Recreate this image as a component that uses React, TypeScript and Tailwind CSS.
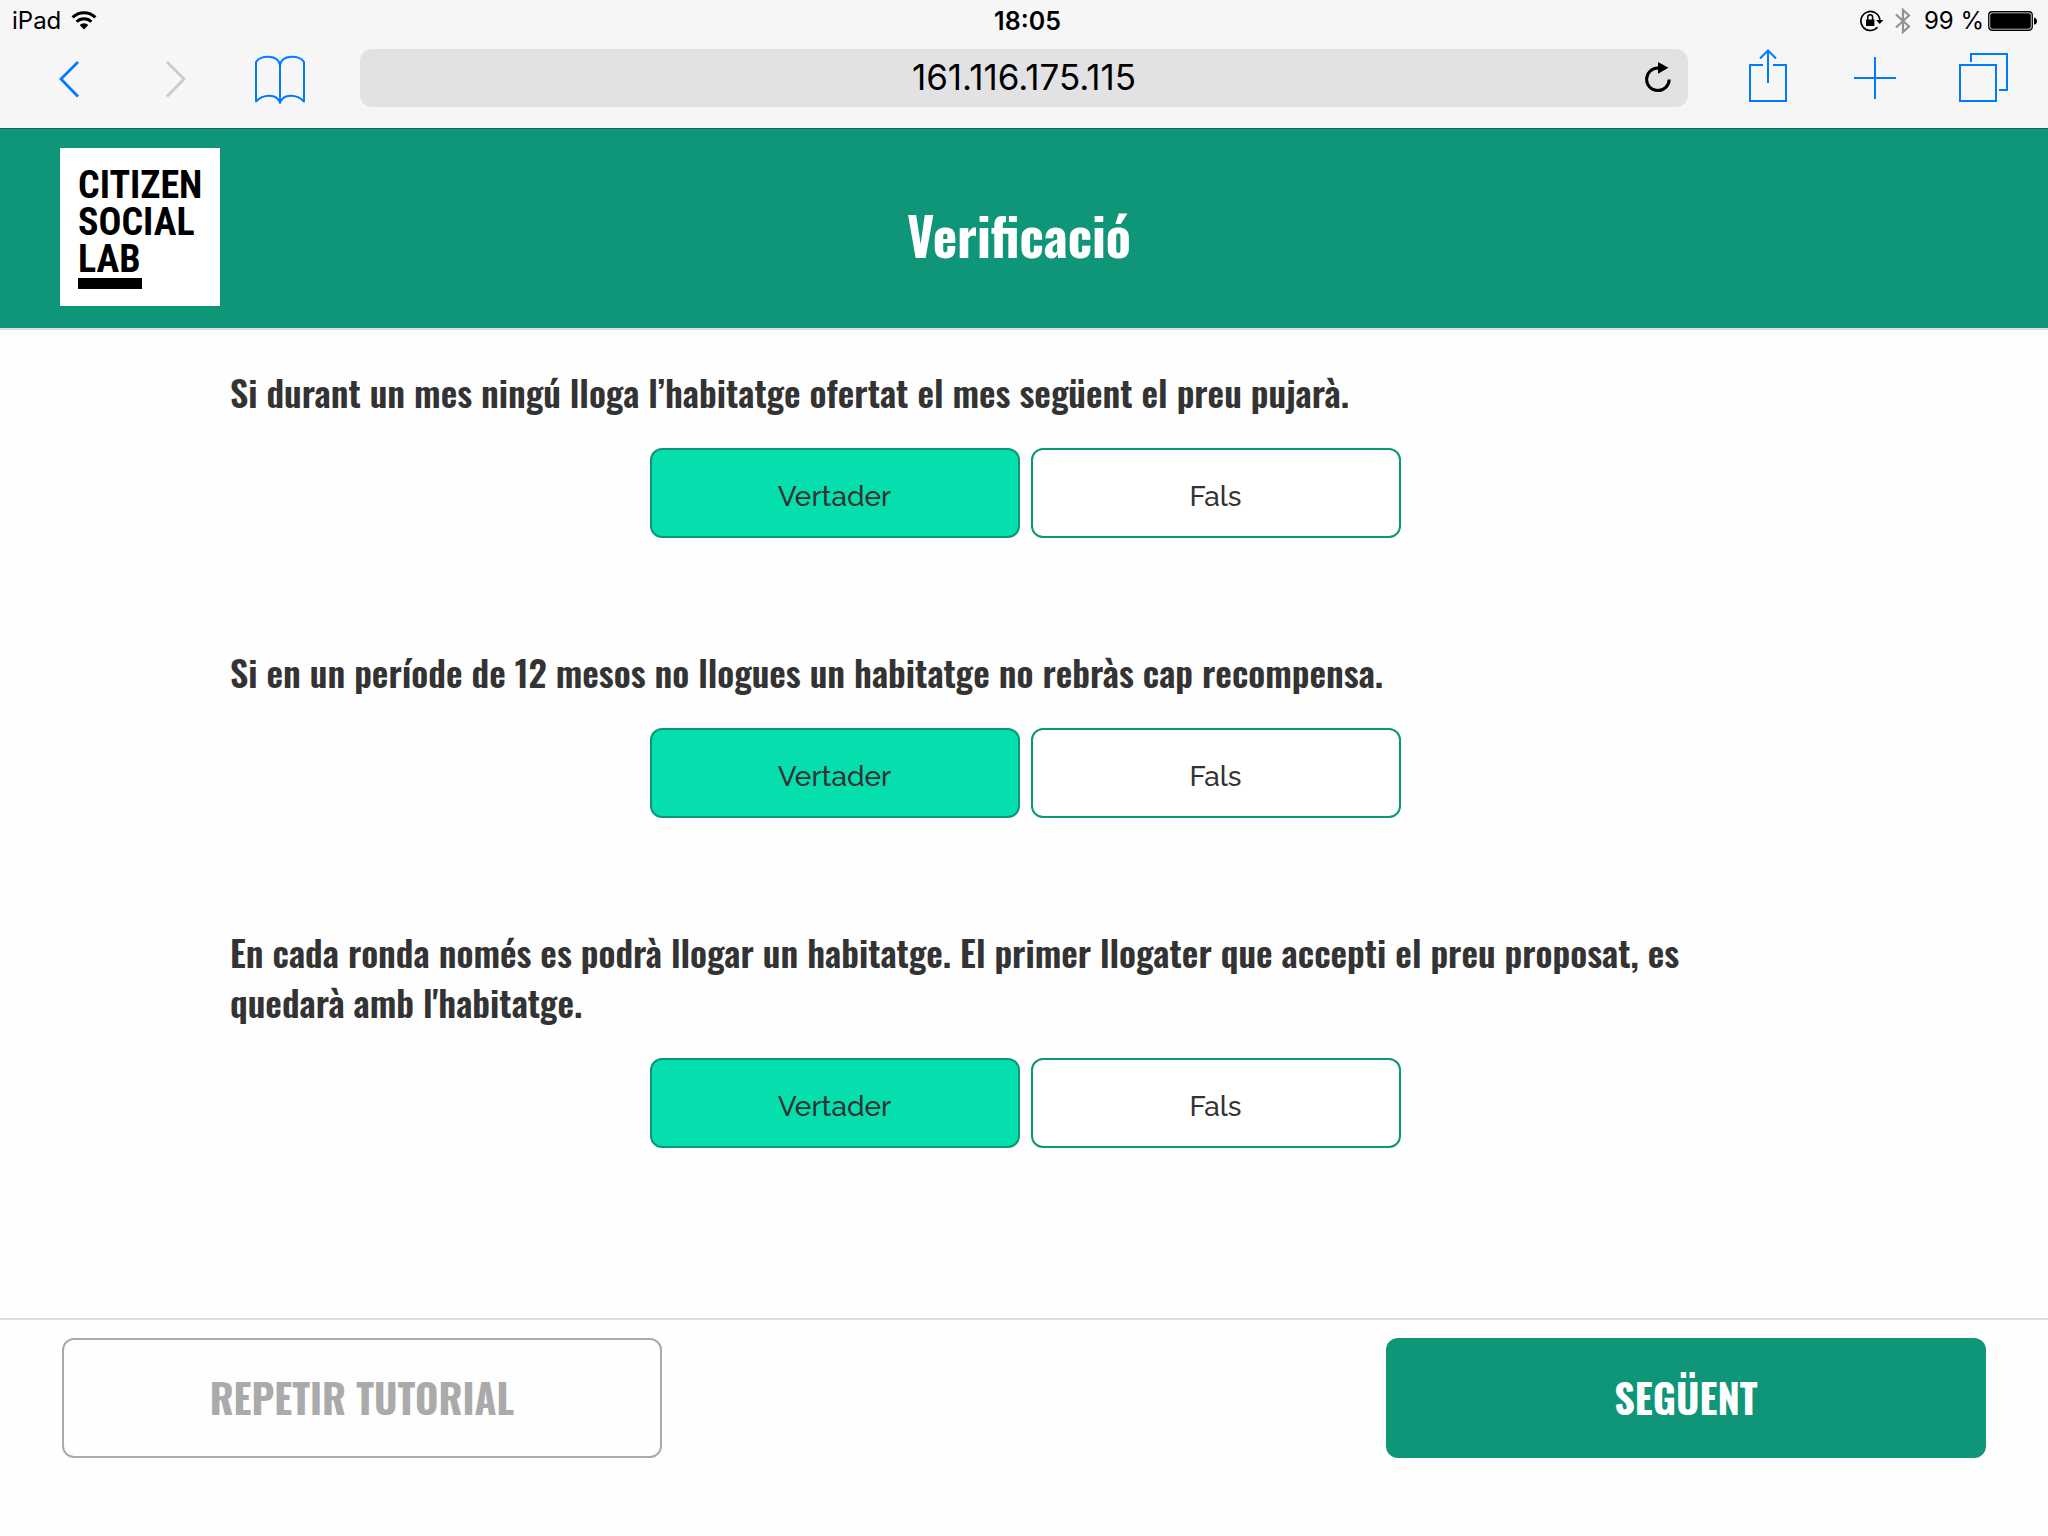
import { useState } from "react";

const display = "font-['Oswald',sans-serif]";

function StatusBar() {
  return (
    <div className="grid h-10 grid-cols-3 items-center pt-px pr-[11px] pl-3 text-2xl leading-8 text-black">
      <div className="flex items-center gap-[10px]">
        <span>iPad</span>
        <svg width="26" height="20" viewBox="0 0 26 20" aria-label="Wi-Fi">
          <g fill="none" stroke="#000" strokeWidth="3">
            <path d="M1.600 6.400a16.200 16.200 0 0 1 22.800 0" />
            <path d="M5.600 10.800a10.600 10.600 0 0 1 14.800 0" />
          </g>
          <path d="M8.700 14a6.200 6.200 0 0 1 8.600 0L13 18.500z" />
        </svg>
      </div>
      <div className="pl-[6px] text-center text-[25px] font-semibold">18:05</div>
      <div className="flex items-center justify-end">
        <svg width="24" height="22" viewBox="0 0 24 22" className="mr-[11px]" aria-label="Rotation lock">
          <path d="M17.500 17.300A9.500 9.500 0 1 1 19.900 10.500" fill="none" stroke="#000" strokeWidth="1.700" />
          <path d="M16 10h7.400l-3.700 4z" />
          <path d="M6 9.500h8.400v6.500H6z" />
          <path d="M7.800 10V7.200a2.400 2.400 0 0 1 4.800 0V10" fill="none" stroke="#000" strokeWidth="1.500" />
        </svg>
        <svg width="16" height="28" viewBox="0 0 16 28" className="mr-[13px]" aria-label="Bluetooth">
          <path d="M1 7.500l13 12-6 5.500V3l6 5.500-13 12" fill="none" stroke="#929292" strokeWidth="2.200" />
        </svg>
        <span className="mr-1">99 %</span>
        <svg width="49" height="20" viewBox="0 0 49 20" aria-label="Battery">
          <rect x=".75" y=".75" width="43.500" height="18.500" rx="3.400" fill="none" stroke="#000" strokeWidth="1.300" />
          <rect x="2.200" y="2.200" width="40.600" height="15.600" rx="2" />
          <path d="M46 6.600q3 1 3 3.600t-3 3.600z" />
        </svg>
      </div>
    </div>
  );
}

function Toolbar() {
  return (
    <div className="flex h-[89px] items-start border-b border-[#0d6b55] pt-2 text-[#007aff]">
      <button type="button" aria-label="Back" className="ml-[58px]">
        <svg width="22" height="60" viewBox="0 0 22 60" fill="none" stroke="currentColor" strokeWidth="2.800">
          <path d="M20 14L3 31l17 17.500" />
        </svg>
      </button>
      <button type="button" aria-label="Forward" disabled className="ml-[85px] text-[#cbcbcb]">
        <svg width="22" height="60" viewBox="0 0 22 60" fill="none" stroke="currentColor" strokeWidth="2.800">
          <path d="M2 14l17 17L2 48.500" />
        </svg>
      </button>
      <button type="button" aria-label="Bookmarks" className="ml-[68px]">
        <svg width="50" height="60" viewBox="0 0 50 60" fill="none" stroke="currentColor" strokeWidth="2" strokeLinejoin="round">
          <path d="M25 17C23 6 5 7 1 14v39.500C8 46 22 45 25 55c3-10 17-9 24-1.500V14C45 7 27 6 25 17v38" />
        </svg>
      </button>
      <div className="mt-px ml-[55px] flex h-[58px] flex-1 items-center rounded-xl bg-[#e2e2e4] text-black">
        <input
          type="text"
          aria-label="Address"
          defaultValue="161.116.175.115"
          className="h-full min-w-0 flex-1 bg-transparent pb-[2px] pl-[70px] text-center text-[35px] outline-none"
        />
        <button type="button" aria-label="Reload" className="mr-[14px] ml-[26px]">
          <svg width="30" height="32" viewBox="0 0 30 32">
            <path d="M25.200 17.500A11.300 11.300 0 1 1 14 6" fill="none" stroke="#000" strokeWidth="3" />
            <path d="M14 0l10.500 5.800L14 11.800z" />
          </svg>
        </button>
      </div>
      <button type="button" aria-label="Share" className="ml-[61px]">
        <svg width="38" height="60" viewBox="0 0 38 60" fill="none" stroke="currentColor" strokeWidth="2">
          <path d="M14 17H1v36h36V17H24M19 35V3M11 10.500L19 2.500l8 8" />
        </svg>
      </button>
      <button type="button" aria-label="New tab" className="ml-[67px]">
        <svg width="42" height="60" viewBox="0 0 42 60" fill="none" stroke="currentColor" strokeWidth="2">
          <path d="M0 30h42M21 9v42" />
        </svg>
      </button>
      <button type="button" aria-label="Tabs" className="mr-10 ml-[63px]">
        <svg width="49" height="60" viewBox="0 0 49 60" fill="none" stroke="currentColor" strokeWidth="2">
          <path d="M1 17h36v36H1zM12 14V6h36v36h-8" />
        </svg>
      </button>
    </div>
  );
}

function Logo() {
  return (
    <div className="h-[158px] w-40 bg-white pt-[19px] pl-[18px] font-['Roboto_Condensed',sans-serif] text-[38px] leading-[37px] font-bold text-black">
      <div>CITIZEN</div>
      <div>SOCIAL</div>
      <div>LAB</div>
      <div className="h-[11px] w-16 bg-black" />
    </div>
  );
}

const questions = [
  "Si durant un mes ningú lloga l’habitatge ofertat el mes següent el preu pujarà.",
  "Si en un període de 12 mesos no llogues un habitatge no rebràs cap recompensa.",
  "En cada ronda només es podrà llogar un habitatge. El primer llogater que accepti el preu proposat, es quedarà amb l'habitatge.",
];

function Question({ text }: { text: string }) {
  const [value, setValue] = useState(true);
  const base =
    "h-[90px] w-[370px] rounded-xl border-2 border-[#0f9577] pt-2 font-['Raleway',sans-serif] text-[28px] font-medium text-[#333]";
  return (
    <section className="mb-[109px]">
      <h2 className={`${display} mb-[31px] max-w-[1560px] text-[36px] leading-[50px] font-semibold text-[#333]`}>
        {text}
      </h2>
      <div className="flex justify-center gap-[11px]">
        <button
          type="button"
          aria-pressed={value}
          onClick={() => setValue(true)}
          className={`${base} ${value ? "bg-[#05dfae]" : "bg-white"}`}
        >
          Vertader
        </button>
        <button
          type="button"
          aria-pressed={!value}
          onClick={() => setValue(false)}
          className={`${base} ${value ? "bg-white" : "bg-[#05dfae]"}`}
        >
          Fals
        </button>
      </div>
    </section>
  );
}

export default function App() {
  return (
    <div className="flex min-h-screen flex-col bg-[#fefefe] font-['Inter',sans-serif]">
      <div className="bg-[#f6f6f6]">
        <StatusBar />
        <Toolbar />
      </div>
      <header className="grid grid-cols-[160px_1fr_160px] items-start border-b-2 border-[#dcdcdf] bg-[#0f9577] px-[60px] pt-[19px] pb-[22px]">
        <Logo />
        <h1 className={`${display} mr-[10px] pt-[39px] text-center text-[52px] leading-[96px] font-bold text-white`}>
          Verificació
        </h1>
      </header>
      <main className="flex-1 pt-[37px] pr-[228px] pl-[230px]">
        {questions.map((q) => (
          <Question key={q} text={q} />
        ))}
      </main>
      <footer className="flex items-start justify-between border-t-2 border-[#dcdcdc] px-[62px] pt-[18px] pb-[78px]">
        <button
          type="button"
          className={`${display} h-[120px] w-[600px] rounded-xl border-2 border-[#aaa] pb-[2px] text-[40px] font-bold text-[#aaa]`}
        >
          REPETIR TUTORIAL
        </button>
        <button
          type="button"
          className={`${display} h-[120px] w-[600px] rounded-xl bg-[#0f9577] pb-[2px] text-[40px] font-bold text-white`}
        >
          SEGÜENT
        </button>
      </footer>
    </div>
  );
}
